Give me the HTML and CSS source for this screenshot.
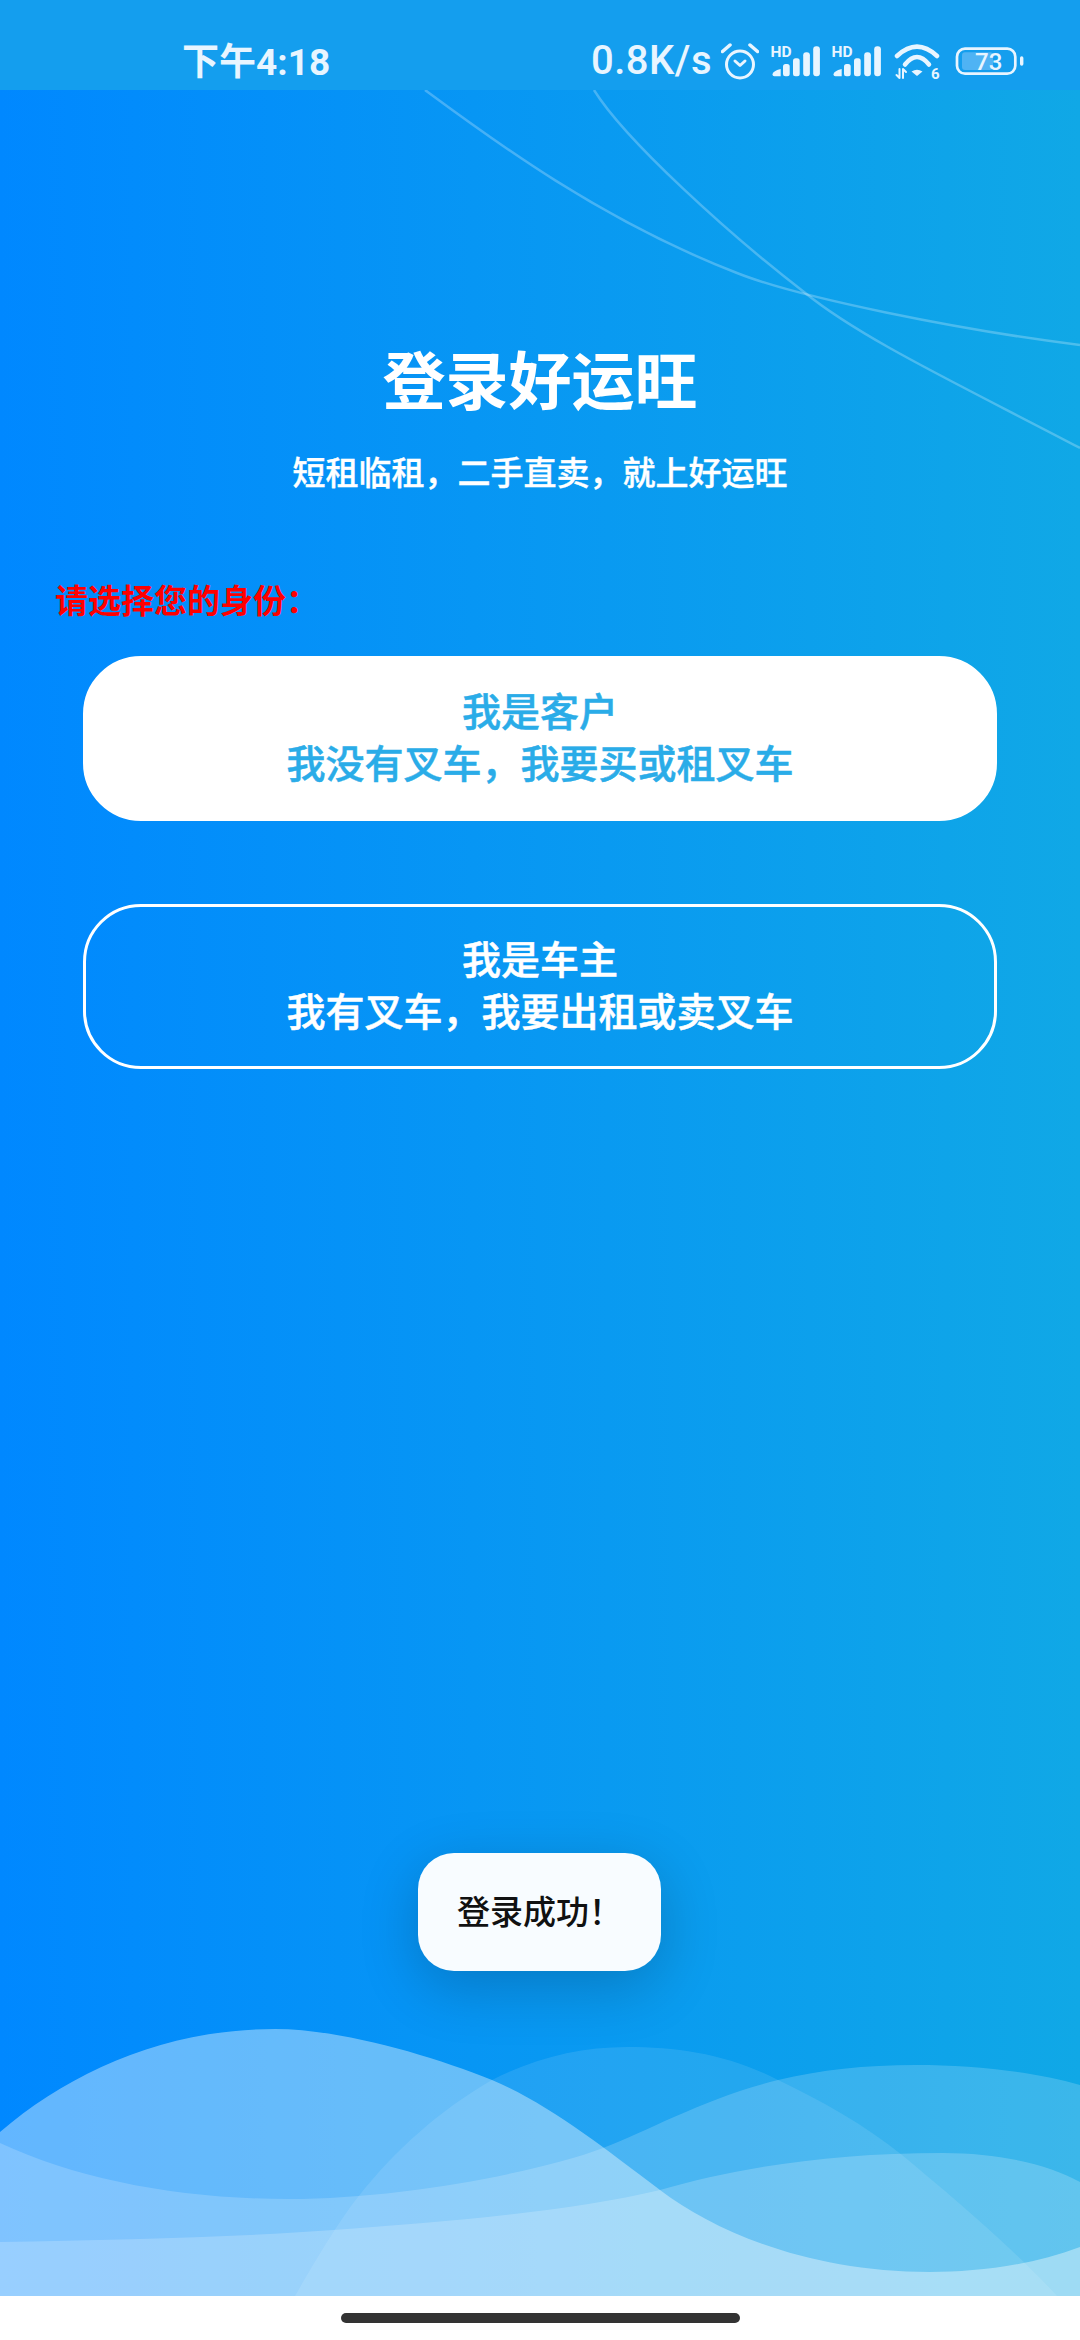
FILE: index.html
```html
<!DOCTYPE html>
<html>
<head>
    <title>登录好运旺</title>
    <link rel="stylesheet" href="styles.css">
</head>
<body>
    <div class="screen">
        <div class="status-bar">
            <span class="time">下午4:18</span>
            <div class="status-right">
                <span class="speed">0.8K/s</span>
                <svg class="icon-alarm" width="38" height="40" viewBox="722 42 38 40" fill="none" stroke="#e8f5ff" stroke-width="3" stroke-linecap="round" stroke-linejoin="round">
                    <circle cx="741" cy="65.500" r="13.500"/>
                    <path d="M723.500 52.500 L731 46" stroke-width="3.500"/>
                    <path d="M751 46 L758.500 52.500" stroke-width="3.500"/>
                    <path d="M736 62 L741 66.500 L746 62"/>
                </svg>
                <svg class="icon-signal" width="50" height="40" viewBox="772 42 50 40" fill="#e8f5ff">
                    <text class="hd" x="771.500" y="58.300">HD</text>
                    <path d="M773.500 75.500 Q773.500 72 781.700 70 V77.300 H775.300 Q773.500 77.300 773.500 75.500z"/>
                    <rect x="784" y="65" width="6.700" height="12.300" rx="2.500"/>
                    <rect x="794" y="59.300" width="6.700" height="18" rx="2.500"/>
                    <rect x="804.200" y="53.300" width="6.700" height="24" rx="3"/>
                    <rect x="814.200" y="47.300" width="6.700" height="30" rx="3"/>
                </svg>
                <svg class="icon-signal" width="50" height="40" viewBox="772 42 50 40" fill="#e8f5ff">
                    <text class="hd" x="771.500" y="58.300">HD</text>
                    <path d="M773.500 75.500 Q773.500 72 781.700 70 V77.300 H775.300 Q773.500 77.300 773.500 75.500z"/>
                    <rect x="784" y="65" width="6.700" height="12.300" rx="2.500"/>
                    <rect x="794" y="59.300" width="6.700" height="18" rx="2.500"/>
                    <rect x="804.200" y="53.300" width="6.700" height="24" rx="3"/>
                    <rect x="814.200" y="47.300" width="6.700" height="30" rx="3"/>
                </svg>
                <svg class="icon-wifi" width="50" height="42" viewBox="892 42 50 42" fill="none" stroke="#e8f5ff" stroke-width="4.500" stroke-linecap="round">
                    <path d="M897 58 Q917 39.400 937 58"/>
                    <path d="M905 66.500 Q917 51.500 929 66.500"/>
                    <path d="M911.500 73.500 Q917 70 922.500 73.500 L917 78z" fill="#e8f5ff" stroke="none"/>
                    <path d="M899.500 71 V80 M896.500 77 L899.500 80 M903 71 V80 M903 71 L906 74" stroke-width="2"/>
                    <text class="wifi-six" x="931" y="80.700">6</text>
                </svg>
                <svg class="icon-battery" width="70" height="40" viewBox="955 42 70 40" fill="none">
                    <rect x="962" y="53.300" width="31" height="17.700" rx="3" fill="#4fb3f4"/>
                    <rect x="957" y="49.700" width="58.300" height="25" rx="8" stroke="#e8f5ff" stroke-width="2.700"/>
                    <rect x="1020" y="57.300" width="3.400" height="9.400" rx="1.700" fill="#e8f5ff"/>
                    <text class="battery-num" x="975" y="70.700">73</text>
                </svg>
            </div>
        </div>

        <div class="page">
            <svg class="top-lines" width="1080" height="400" viewBox="0 90 1080 400" fill="none" stroke="#fff" stroke-opacity="0.25" stroke-width="2.500">
                <path d="M425 90 C490 138 600 220 737 273 C800 298 960 330 1080 345"/>
                <path d="M594 90 C625 140 730 235 804 292 C860 338 960 385 1080 448"/>
            </svg>
            <svg class="waves" width="1080" height="280" viewBox="0 2016 1080 280" fill="#fff">
                <path fill-opacity="0.1" d="M295 2296 C310 2270 338 2222 358 2197 C395 2150 440 2110 492 2080 C535 2058 580 2047 627 2047 C680 2047 730 2055 778 2080 C820 2100 865 2125 902 2155 C950 2195 1010 2245 1057 2296z"/>
                <path fill-opacity="0.39" d="M0 2132 C70 2072 165 2029 275 2029 C340 2029 430 2055 492 2080 C550 2105 600 2145 660 2190 C715 2232 810 2272 930 2272 C975 2272 1030 2266 1080 2247 V2296 H0z"/>
                <path fill-opacity="0.18" d="M0 2143 C80 2180 180 2199 289 2199 C400 2199 540 2172 603 2148 C650 2130 705 2098 778 2080 C820 2070 865 2065 916 2065 C975 2065 1035 2072 1080 2085 V2296 H0z"/>
                <path fill-opacity="0.2" d="M0 2242 C120 2240 240 2237 333 2230 C440 2222 570 2212 660 2190 C735 2168 830 2153 943 2153 C1000 2153 1050 2165 1080 2182 V2296 H0z"/>
            </svg>

            <div class="login-head">
                <h1>登录好运旺</h1>
                <p>短租临租，二手直卖，就上好运旺</p>
            </div>
            <div class="choose-label">请选择您的身份：</div>
            <div class="role-list">
                <div class="role-btn active">
                    <div>我是客户</div>
                    <div>我没有叉车，我要买或租叉车</div>
                </div>
                <div class="role-btn">
                    <div>我是车主</div>
                    <div>我有叉车，我要出租或卖叉车</div>
                </div>
            </div>
            <div class="toast">登录成功！</div>
        </div>

        <div class="home-bar">
            <div class="home-pill"></div>
        </div>
    </div>
</body>
</html>
```

FILE: styles.css
```css
body {
    margin: 0;
    font-family: "Noto Sans CJK SC", "Noto Sans", sans-serif;
    background-color: white;
}
.screen {
    width: 1080px;
    height: 2340px;
    display: flex;
    flex-direction: column;
    overflow: hidden;
}
.status-bar {
    height: 90px;
    flex-shrink: 0;
    display: flex;
    align-items: center;
    padding: 0 55px 0 182px;
    box-sizing: border-box;
    background-color: #149eee;
    color: #e8f5ff;
}
.time {
    font-family: Roboto, "Noto Sans CJK SC", sans-serif;
    font-size: 37px;
    font-weight: 700;
    margin-top: 35px;
    line-height: 44px;
}
.status-right {
    margin-left: auto;
    margin-top: 32px;
    display: flex;
    align-items: center;
    height: 42px;
}
.speed {
    font-family: Roboto, sans-serif;
    font-size: 40px;
    font-weight: 500;
    letter-spacing: 0.5px;
    line-height: 40px;
    margin-right: 9px;
}
.icon-signal {
    margin-left: 11px;
}
.icon-alarm + .icon-signal {
    margin-left: 12px;
}
.icon-wifi {
    margin-left: 10px;
    margin-right: 13px;
}
.hd {
    font-family: Roboto, sans-serif;
    font-size: 15.500px;
    font-weight: 700;
}
.wifi-six {
    font-family: Roboto, sans-serif;
    font-size: 15px;
    font-weight: 700;
    fill: #e8f5ff;
    stroke: none;
}
.battery-num {
    font-family: Roboto, sans-serif;
    font-size: 24px;
    font-weight: 500;
    fill: #e8f5ff;
}
.page {
    position: relative;
    flex: 1;
    background: linear-gradient(90deg, #0088ff, #10a8e6);
    overflow: hidden;
}
.top-lines {
    position: absolute;
    top: 0;
    left: 0;
}
.waves {
    position: absolute;
    bottom: 0;
    left: 0;
}
.login-head {
    position: relative;
    text-align: center;
    color: white;
    padding-top: 247px;
}
.login-head h1 {
    margin: 0;
    font-size: 63px;
    line-height: 80px;
    font-weight: 700;
}
.login-head p {
    margin: 34px 0 0;
    font-size: 33px;
    line-height: 40px;
    font-weight: 500;
    -webkit-text-stroke: 0.4px white;
}
.choose-label {
    position: relative;
    margin: 88px 0 0 55px;
    color: #ff0000;
    font-size: 33px;
    line-height: 40px;
    font-weight: 700;
}
.role-list {
    position: relative;
    display: flex;
    flex-direction: column;
    gap: 83px;
    margin: 37px 83px 0;
}
.role-btn {
    height: 165px;
    box-sizing: border-box;
    padding-bottom: 8px;
    display: flex;
    flex-direction: column;
    justify-content: center;
    text-align: center;
    border: 3px solid white;
    border-radius: 58px;
    color: white;
    font-size: 39px;
    line-height: 52px;
    font-weight: 500;
    -webkit-text-stroke: 0.5px white;
}
.role-btn.active {
    background-color: white;
    color: #2aace8;
    -webkit-text-stroke-color: #2aace8;
}
.toast {
    position: absolute;
    left: 418px;
    top: 1763px;
    width: 243px;
    height: 118px;
    box-sizing: border-box;
    padding: 0 39px;
    border-radius: 36px;
    background-color: #f8fcff;
    color: #111;
    font-size: 33px;
    font-weight: 500;
    line-height: 115px;
    box-shadow: 0 16px 60px rgba(0,0,0,0.2);
}
.home-bar {
    height: 44px;
    flex-shrink: 0;
    background-color: white;
    display: flex;
    justify-content: center;
    padding-top: 17px;
    box-sizing: border-box;
}
.home-pill {
    width: 399px;
    height: 10px;
    border-radius: 5px;
    background-color: #333;
}
```
